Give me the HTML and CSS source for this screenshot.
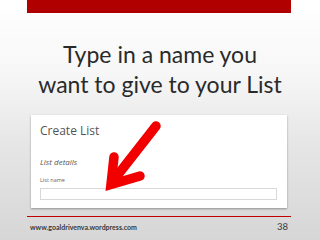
FILE: index.html
```html
<!DOCTYPE html>
<html>
<head>
<meta charset="utf-8">
<link rel="stylesheet" href="styles.css">
</head>
<body>
<div class="slide">
  <div class="topbar"></div>
  <h1 class="title">Type in a name you<br>want to give to your List</h1>
  <div class="card">
    <div class="card-title">Create List</div>
    <div class="section">List details</div>
    <div class="label">List name</div>
    <div class="input"></div>
    <svg class="arrow" width="256" height="93" viewBox="0 0 256 93">
      <path d="M125 11 L82 66" stroke="#f20000" stroke-width="9.5" stroke-linecap="round" fill="none"/>
      <path d="M83 42 L80 69.5 L109 61" stroke="#f20000" stroke-width="9.5" stroke-linecap="round" stroke-linejoin="miter" stroke-miterlimit="10" fill="none"/>
    </svg>
  </div>
  <div class="footer">
    <span class="url">www.goaldrivenva.wordpress.com</span>
    <span class="num">38</span>
  </div>
</div>
</body>
</html>
```
FILE: styles.css
```css
html, body { margin: 0; padding: 0; }
body {
  width: 320px; height: 240px; overflow: hidden;
  background: linear-gradient(to bottom, #ffffff 0%, #f7f7f7 30%, #e6e6e6 60%, #d6d6d6 100%);
  font-family: "Lato", "Open Sans", sans-serif;
}
.slide { display: flex; flex-direction: column; height: 240px; }
.topbar { height: 13px; margin: 0 29px 0 27px; background: #b10000; flex: none; }
.title {
  margin: 26px 0 0; font-weight: 400; font-size: 23px; line-height: 30px;
  text-align: center; color: #2a2a2a;
}
.card {
  position: relative; flex: none;
  margin: 16px 33px 0 31px; height: 93px; box-sizing: border-box;
  background: #fff; box-shadow: 0 1px 2px rgba(0,0,0,0.35);
  padding: 8px 10px 0 9px;
  font-family: "Open Sans", sans-serif;
}
.card-title { font-size: 12px; line-height: 16px; color: #555; }
.section { margin-top: 17px; font-size: 8px; font-style: italic; color: #555; line-height: 11px; }
.label { margin-top: 9px; font-size: 5.5px; color: #666; line-height: 8px; }
.input { margin-top: 4px; height: 12px; border: 1px solid #d8d8d8; box-sizing: border-box; }
.arrow { position: absolute; left: 0; top: 0; }
.footer {
  margin: 8px 29px 0 27px; border-top: 1px solid #c00000;
  display: flex; justify-content: space-between; align-items: baseline; padding: 4px 3px 0 3px;
  font-family: "Lato", sans-serif; color: #3a3a3a;
}
.url { font-size: 7px; font-weight: 700; }
.num { font-size: 9.5px; }
```
